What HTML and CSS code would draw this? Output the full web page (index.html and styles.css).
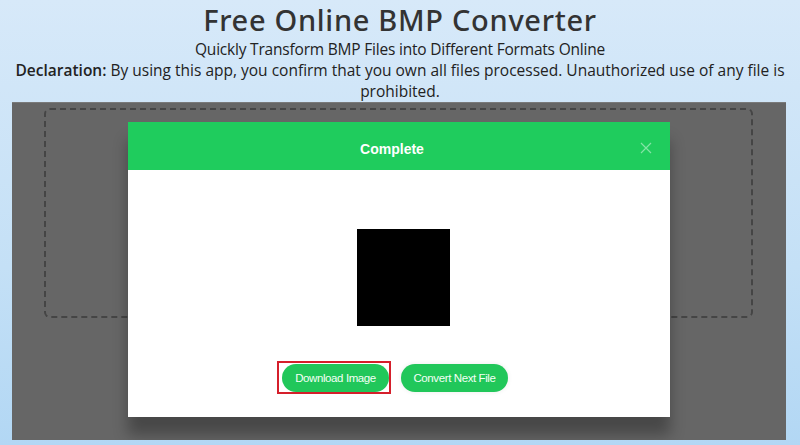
FILE: index.html
```html
<!DOCTYPE html>
<html>
<head>
<meta charset="utf-8">
<link rel="stylesheet" href="styles.css">
</head>
<body>
<header class="intro">
  <h1 class="title">Free Online BMP Converter</h1>
  <p class="subtitle">Quickly Transform BMP Files into Different Formats Online</p>
  <p class="declaration"><strong>Declaration:</strong> By using this app, you confirm that you own all files processed. Unauthorized use of any file is prohibited.</p>
</header>
<main class="workspace">
  <div class="dropzone"></div>
  <div class="modal">
    <div class="modal-head">
      <span class="modal-title">Complete</span>
      <svg class="close" width="12" height="12" viewBox="0 0 12 12"><path d="M1 1L11 11M11 1L1 11" stroke="currentColor" stroke-width="1.2" fill="none"/></svg>
    </div>
    <div class="modal-body">
      <div class="preview"></div>
      <div class="actions">
        <span class="highlight"><button class="btn">Download Image</button></span>
        <button class="btn btn-soft">Convert Next File</button>
      </div>
    </div>
  </div>
</main>
</body>
</html>
```
FILE: styles.css
```css
html, body {
  margin: 0;
  padding: 0;
}
body {
  width: 800px;
  height: 445px;
  overflow: hidden;
  background: linear-gradient(180deg, #d7e9f9 0%, #c4e0f6 60%, #b2d7f4 100%);
  font-family: "Open Sans", "Noto Sans", sans-serif;
  color: #333;
}
.intro {
  text-align: center;
  height: 102px;
}
.title {
  margin: 0;
  font-family: "Noto Sans", sans-serif;
  font-size: 29px;
  font-weight: 500;
  line-height: 40px;
  letter-spacing: 0.7px;
  color: #333;
}
.subtitle {
  margin: -1px 0 0;
  font-size: 15.5px;
  line-height: 21px;
  letter-spacing: -0.2px;
  color: #222;
}
.declaration {
  margin: 0 auto;
  width: 780px;
  font-size: 15.5px;
  line-height: 21px;
  letter-spacing: 0;
  color: #222;
}
.declaration strong {
  font-weight: 600;
}
.workspace {
  position: relative;
  margin: 0 14px 0 12px;
  height: 338px;
  background: #666;
  border-top: 1px solid #7a7a7a;
  box-sizing: border-box;
  overflow: hidden;
  padding: 5px 33px 0 32px;
}
.dropzone {
  height: 210px;
  border: 2px dashed #454545;
  border-radius: 6px;
  box-sizing: border-box;
}
.modal {
  position: absolute;
  left: 116px;
  top: 19px;
  width: 542px;
  height: 295px;
  background: #fff;
  box-shadow: 0 18px 14px rgba(0, 0, 0, 0.3);
  display: flex;
  flex-direction: column;
}
.modal-head {
  position: relative;
  height: 48px;
  box-sizing: border-box;
  padding: 6px 14px 0 0;
  background: #1fcc5d;
  display: flex;
  align-items: center;
  justify-content: center;
}
.modal-title {
  font-family: "Liberation Sans", Arial, sans-serif;
  font-weight: 700;
  font-size: 14px;
  color: #fff;
}
.close {
  position: absolute;
  right: 18px;
  top: 20px;
  color: rgba(255, 255, 255, 0.45);
}
.modal-body {
  flex: 1;
  display: flex;
  flex-direction: column;
  align-items: center;
  padding-top: 59px;
}
.preview {
  width: 93px;
  height: 97px;
  background: #000;
  margin-left: 9px;
}
.actions {
  align-self: flex-start;
  margin: 35px 0 0 149px;
  display: flex;
  gap: 10px;
  align-items: flex-start;
}
.highlight {
  display: flex;
  padding: 1px 0 0 3px;
  border: 2px solid #d51f2b;
  width: 114px;
  height: 33px;
  box-sizing: border-box;
}
.btn {
  width: 107px;
  height: 28px;
  border: none;
  border-radius: 14px;
  background: #21c75a;
  color: #f4fff6;
  font-family: "Liberation Sans", Arial, sans-serif;
  font-size: 11.5px;
  letter-spacing: -0.4px;
  padding: 0;
  flex-shrink: 0;
}
.btn-soft {
  margin-top: 3px;
  box-shadow: 0 0 5px rgba(0, 0, 0, 0.08);
}
```
